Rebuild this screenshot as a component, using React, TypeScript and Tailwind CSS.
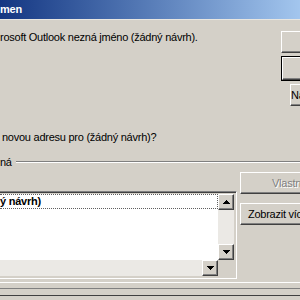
import { ReactNode } from 'react';

function Btn({ children, top = false, disabled = false, cls = '' }: { children?: ReactNode; top?: boolean; disabled?: boolean; cls?: string }) {
    const inner = (
        <div className="h-full border-t border-l border-t-white border-l-white border-b border-r border-b-[#404040] border-r-[#404040] shadow-[inset_-1px_-1px_#808080] flex items-center">
            <span className={disabled ? 'text-[#808080] [text-shadow:1px_1px_#ffffff]' : 'text-black'}>{children}</span>
        </div>
    );
    if (top) return <div className={`border border-black ${cls}`}>{inner}</div>;
    return <div className={cls}>{inner}</div>;
}

export default function App() {
    return (
        <div className="w-[300px] h-[300px] overflow-hidden bg-[#d4d0c8] flex flex-col text-[11px] tracking-[-0.25px] font-['Liberation_Sans',Arial,sans-serif] text-black leading-none">
            <div className="h-[19px] shrink-0 bg-gradient-to-r from-[#153682] to-[#a3c6ee] flex items-center text-white font-bold">men</div>
            <div className="h-px shrink-0 bg-[#e8e6e1]" />

            <div className="flex shrink-0">
                <div className="flex-1 pt-[12px]">
                    <p className="h-[11px]">rosoft Outlook nezná jméno (žádný návrh).</p>
                    <p className="mt-[89px] pl-[2px] h-[11px]">novou adresu pro (žádný návrh)?</p>
                </div>
                <div className="w-[19px] shrink-0 flex flex-col pt-[11px] gap-[3px]">
                    <Btn cls="h-[22px] w-[80px]" />
                    <Btn top cls="h-[25px] w-[80px]" />
                    <Btn cls="h-[22px] w-[80px] pl-[9px]">Na</Btn>
                </div>
            </div>

            <div className="flex items-center mt-[14px] shrink-0 h-[10px]">
                <span className="w-[16px] shrink-0">ná</span>
                <div className="flex-1 h-[2px] border-t border-t-[#808080] border-b border-b-white" />
            </div>

            <div className="flex shrink-0 h-[107px] mt-[5px]">
                <div className="w-[237px] shrink-0 pt-[19px] flex flex-col">
                    <div className="h-[88px] border-t border-t-[#808080] border-b border-b-white border-r border-r-white shadow-[inset_0_1px_#404040,inset_-1px_-1px_#d4d0c8] flex flex-col pt-[2px] pr-[2px] pb-[2px]">
                        <div className="flex flex-1 min-h-0">
                            <div className="flex-1 bg-white">
                                <div className="h-[15px] border border-dotted border-[#606060] border-l-0 flex items-center font-bold">ý návrh)</div>
                            </div>
                            <div className="w-[16px] bg-[#ebe9e5] flex flex-col justify-between">
                                <ScrollBtn dir="up" />
                                <ScrollBtn dir="down" />
                            </div>
                        </div>
                        <div className="h-[16px] flex">
                            <div className="flex-1 bg-[#ebe9e5] flex justify-end">
                                <ScrollBtn dir="down" />
                            </div>
                            <div className="w-[16px] bg-[#d4d0c8]" />
                        </div>
                    </div>
                </div>
                <div className="flex-1 flex flex-col pl-[3px] gap-[9px]">
                    <Btn disabled cls="h-[22px] w-[110px]">
                        <span className="pl-[31px]">Vlastnosti</span>
                    </Btn>
                    <Btn cls="h-[22px] w-[110px]">
                        <span className="pl-[7px]">Zobrazit více jmen</span>
                    </Btn>
                </div>
            </div>

            <div className="flex-1 flex flex-col">
                <div className="h-[3px]" />
                <div className="h-px bg-[#ffffff]" />
                <div className="h-[5px]" />
                <div className="h-px bg-[#808080]" />
                <div className="h-[6px]" />
                <div className="h-px bg-[#404040]" />
            </div>
        </div>
    );
}

function ScrollBtn({ dir }: { dir: 'up' | 'down' }) {
    return (
        <div className="w-[16px] h-[16px] bg-[#d4d0c8] border-t border-l border-t-white border-l-white border-b border-r border-b-[#404040] border-r-[#404040] shadow-[inset_-1px_-1px_#808080] flex items-center justify-center">
            <svg width="7" height="4" viewBox="0 0 7 4">
                {dir === 'up' ? <path d="M3 0h1v1h1v1h1v1h1v1H0V3h1V2h1V1h1z" fill="#000" /> : <path d="M0 0h7v1H6v1H5v1H4v1H3V3H2V2H1V1H0z" fill="#000" />}
            </svg>
        </div>
    );
}
